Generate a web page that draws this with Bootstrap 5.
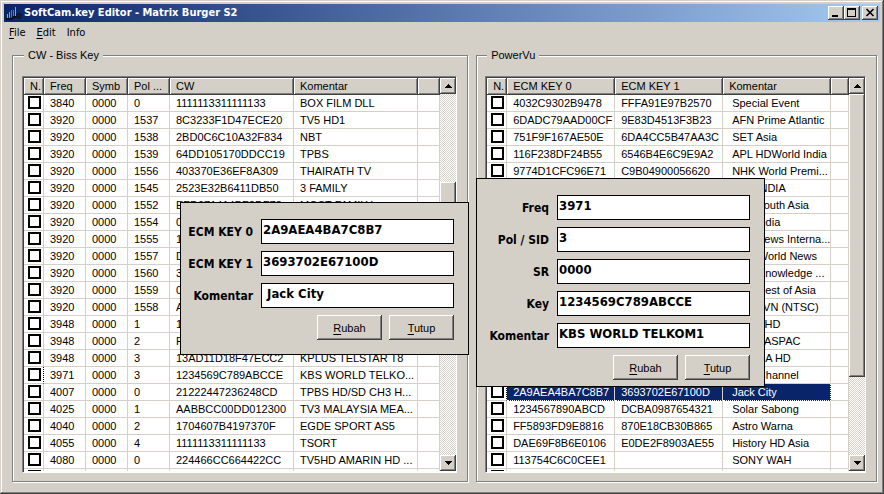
<!DOCTYPE html>
<html lang="id">
<head>
<meta charset="utf-8">
<meta name="viewport" content="width=device-width, initial-scale=1">
<title>SoftCam.key Editor - Matrix Burger S2</title>
<link href="https://cdn.jsdelivr.net/npm/bootstrap@5.3.0/dist/css/bootstrap.min.css" rel="stylesheet">
<style>
:root{--face:#d4d0c8;--tahoma:"DejaVu Sans Condensed","DejaVu Sans",sans-serif}
body{background:var(--face);color:#000;font:11px/16px "Liberation Sans",sans-serif}
.win{background:var(--face);padding:4px;box-shadow:inset -1px -1px #404040,inset 1px 1px var(--face),inset -2px -2px #808080,inset 2px 2px #fff}
.titlebar{height:18px;padding:0 2px;background:linear-gradient(90deg,#0a246a,#a6caf0);color:#fff;font:bold 11px/18px var(--tahoma)}
.app-name{padding-left:2px}
.raised{background:var(--face);border:0;border-radius:0;color:#000;box-shadow:inset -1px -1px #404040,inset 1px 1px #fff,inset -2px -2px #808080}
.capbtn{width:16px;height:14px;padding:0}
.capbtn-close{margin-left:2px}
.capbtn svg,.arrow svg{display:block;margin:auto}
.menu{padding:4px 5px;gap:11px;font:11px/14px var(--tahoma)}
.menu a{color:#000;text-decoration:none}
.menu u,.push u{text-underline-offset:2px}
.groups{gap:8px;padding:3px 3px 8px 8px;min-height:0}
.panel{border:1px solid #808080;box-shadow:1px 1px #fff,inset 1px 1px #fff;padding:13px 10px 8px 8px;margin:0;min-width:0;display:flex;flex-direction:column}
.panel legend{float:none;width:auto;margin:0 0 0 2px;padding:0 4px;font-size:11px;line-height:16px;background:var(--face)}
.g-left{flex:457 1 0;padding-left:9px}
.g-right{flex:400 1 0}
.list{flex:1 1 0;min-height:0;background:#fff;border:1px solid;border-color:#808080 #fff #fff #808080;box-shadow:inset 1px 1px #404040;padding:1px 0 1px 1px;overflow:hidden}
.rows{flex:1 1 0;min-width:0;overflow:hidden}
.grid{width:100%;table-layout:fixed;border-collapse:separate;border-spacing:0}
.grid th{height:17px;padding:0 0 0 6px;font-weight:400;line-height:17px;background:var(--face);box-shadow:inset -1px -1px #404040,inset 1px 1px #fff,inset -2px -2px #808080;white-space:nowrap;overflow:hidden}
.grid td{height:17px;padding:0 0 0 6px;line-height:16px;border:solid var(--face);border-width:0 1px 1px 0;white-space:nowrap;overflow:hidden}
.grid td:first-child{padding:1px 0 0 4px;vertical-align:top}
.c-no{width:20px}.c-num{width:42px}.c-cw{width:124px}.c-key{width:108px}
.g-right td:nth-child(4){padding-left:9px}
.tick{appearance:none;display:block;width:13px;height:13px;margin:0;border:2px solid #000;border-radius:0;background:#fff}
.tick:checked{background:#000}
.focused td:first-child{border-right:1px dotted #000}
.chosen td:nth-child(n+2):nth-child(-n+4){background:#0a246a;color:#fff;border-bottom:1px dotted #fff}
.chosen td:nth-child(4){border-right:1px dotted #fff}
.scroll{width:16px;background:repeating-conic-gradient(#fff 0 25%,var(--face) 0 50%) 0 0/2px 2px}
.arrow{height:16px;padding:0;flex:none}
.before{flex:88 1 0}.thumb-mid{flex:92 1 0}.after{flex:181 1 0}
.thumb-top{flex:283 1 0}.after-top{flex:78 1 0}
.dialogbox{position:absolute;background:var(--face);border:1px solid #000;width:289px;padding:16px 14px 14px 8px}
.edit-key{left:180px;top:202px}
.edit-biss{left:476px;top:178px;padding-bottom:6px}
.fields{display:grid;grid-template-columns:auto 193px;justify-content:end;gap:7px 8px}
.fields label{font:bold 12px/25px var(--tahoma);text-align:right;padding-top:1px;height:25px;white-space:nowrap}
.fields input{width:100%;height:25px;border:1px solid #000;border-radius:0;padding:0 1px 4px;background:#fff;color:#000;font:bold 13px/19px var(--tahoma)}
.actions{gap:7px;margin-top:7px}
.push{width:65px;height:25px;padding:0;font-size:11px}
</style>
<script src="https://cdn.jsdelivr.net/npm/bootstrap@5.3.0/dist/js/bootstrap.bundle.min.js"></script>
</head>
<body>
<main class="win vh-100 d-flex flex-column">
  <header class="titlebar d-flex align-items-center">
    <svg width="16" height="16" viewBox="0 0 16 16" aria-hidden="true"><path d="M1.5 9v4M9.500 2v9" stroke="#20d8c0"/><path d="M3.500 7v6" stroke="#30e060"/><path d="M5.500 5v8M7.500 5v6" stroke="#1890d8"/><path d="M0 14h5l3-2h5" fill="none" stroke="#081018" stroke-width="2"/><circle cx="13" cy="11" r="2" fill="none" stroke="#10182c" stroke-width="2"/></svg>
    <span class="app-name flex-grow-1">SoftCam.key Editor - Matrix Burger S2</span>
    <button class="raised capbtn" aria-label="Minimize"><svg width="16" height="14"><path d="M4 9h6v2H4z"/></svg></button>
    <button class="raised capbtn" aria-label="Maximize"><svg width="16" height="14"><path d="M3 2h9v9H3zM4 4v6h7V4z" fill-rule="evenodd"/></svg></button>
    <button class="raised capbtn capbtn-close" aria-label="Close"><svg width="16" height="14"><path d="M4.500 3l7 7M11.500 3l-7 7" stroke="#000" stroke-width="1.600"/></svg></button>
  </header>
  <nav class="menu d-flex"><a href="#"><u>F</u>ile</a><a href="#"><u>E</u>dit</a><a href="#">Info</a></nav>
  <div class="groups d-flex flex-grow-1">
    <fieldset class="panel g-left">
      <legend>CW - Biss Key</legend>
      <div class="list d-flex">
        <div class="rows"><table class="grid">
          <colgroup><col class="c-no"><col class="c-num"><col class="c-num"><col class="c-num"><col class="c-cw"><col class="c-cw"><col></colgroup>
          <thead><tr><th>N.</th><th>Freq</th><th>Symb</th><th>Pol ...</th><th>CW</th><th>Komentar</th><th></th></tr></thead>
          <tbody id="biss"></tbody>
        </table></div>
        <div class="scroll d-flex flex-column">
          <button class="raised arrow" aria-label="Scroll up"><svg width="7" height="4"><path d="M3 0h1v1h1v1h1v1h1v1H0V3h1V2h1V1h1z"/></svg></button>
          <div class="before"></div><div class="raised thumb-mid"></div><div class="after"></div>
          <button class="raised arrow" aria-label="Scroll down"><svg width="7" height="4"><path d="M0 0h7v1H6v1H5v1H4v1H3V3H2V2H1V1H0z"/></svg></button>
        </div>
      </div>
    </fieldset>
    <fieldset class="panel g-right">
      <legend>PowerVu</legend>
      <div class="list d-flex">
        <div class="rows"><table class="grid">
          <colgroup><col class="c-no"><col class="c-key"><col class="c-key"><col class="c-key"><col></colgroup>
          <thead><tr><th>N.</th><th>ECM KEY 0</th><th>ECM KEY 1</th><th>Komentar</th><th></th></tr></thead>
          <tbody id="power"></tbody>
        </table></div>
        <div class="scroll d-flex flex-column">
          <button class="raised arrow" aria-label="Scroll up"><svg width="7" height="4"><path d="M3 0h1v1h1v1h1v1h1v1H0V3h1V2h1V1h1z"/></svg></button>
          <div class="raised thumb-top"></div><div class="after-top"></div>
          <button class="raised arrow" aria-label="Scroll down"><svg width="7" height="4"><path d="M0 0h7v1H6v1H5v1H4v1H3V3H2V2H1V1H0z"/></svg></button>
        </div>
      </div>
    </fieldset>
  </div>
</main>

<form class="dialogbox edit-key">
  <div class="fields">
    <label for="k0">ECM KEY 0</label><input id="k0" value="2A9AEA4BA7C8B7">
    <label for="k1">ECM KEY 1</label><input id="k1" value="3693702E67100D">
    <label for="kk">Komentar</label><input id="kk" value=" Jack City">
  </div>
  <div class="actions d-flex justify-content-end"><button type="button" class="raised push"><u>R</u>ubah</button><button type="button" class="raised push"><u>T</u>utup</button></div>
</form>

<form class="dialogbox edit-biss">
  <div class="fields">
    <label for="bf">Freq</label><input id="bf" value="3971">
    <label for="bp">Pol / SID</label><input id="bp" value="3">
    <label for="bs">SR</label><input id="bs" value="0000">
    <label for="bk">Key</label><input id="bk" value="1234569C789ABCCE">
    <label for="bc">Komentar</label><input id="bc" value="KBS WORLD TELKOM1">
  </div>
  <div class="actions d-flex justify-content-end"><button type="button" class="raised push"><u>R</u>ubah</button><button type="button" class="raised push"><u>T</u>utup</button></div>
</form>

<script>
const biss = `3840|0000|0|1111113311111133|BOX FILM DLL
3920|0000|1537|8C3233F1D47ECE20|TV5 HD1
3920|0000|1538|2BD0C6C10A32F834|NBT
3920|0000|1539|64DD105170DDCC19|TPBS
3920|0000|1556|403370E36EF8A309|THAIRATH TV
3920|0000|1545|2523E32B6411DB50|3 FAMILY
3920|0000|1552|EFD071414BF2DF78|MOST FAMILY
3920|0000|1554|0|
3920|0000|1555|1|
3920|0000|1557|D|
3920|0000|1560|3|
3920|0000|1559|0|
3920|0000|1558|A|
3948|0000|1|1|
3948|0000|2|F|
3948|0000|3|13AD11D18F47ECC2|KPLUS TELSTAR T8
3971|0000|3|1234569C789ABCCE|KBS WORLD TELKO...
4007|0000|0|21222447236248CD|TPBS HD/SD CH3 H...
4025|0000|1|AABBCC00DD012300|TV3 MALAYSIA MEA...
4040|0000|2|1704607B4197370F|EGDE SPORT AS5
4055|0000|4|1111113311111133|TSORT
4080|0000|0|224466CC664422CC|TV5HD AMARIN HD ...
||||`;
const power = `4032C9302B9478|FFFA91E97B2570|Special Event
6DADC79AAD00CF|9E83D4513F3B23|AFN Prime Atlantic
751F9F167AE50E|6DA4CC5B47AA3C|SET Asia
116F238DF24B55|6546B4E6C9E9A2|APL HDWorld India
9774D1CFC96E71|C9B04900056620|NHK World Premi...
||SET INDIA
||SET South Asia
||SET India
||SET News Interna...
||BBC World News
||BBC Knowledge ...
||BBC Best of Asia
||KTV TVN (NTSC)
||Movie HD
||Movie ASPAC
||AFRICA HD
||ABC Channel
2A9AEA4BA7C8B7|3693702E67100D|Jack City
1234567890ABCD|DCBA0987654321|Solar Sabong
FF5893FD9E8816|870E18CB30B865|Astro Warna
DAE69F8B6E0106|E0DE2F8903AE55|History HD Asia
113754C6C0CEE1||SONY WAH
||`;
function fill(id, data, active, cls) {
  document.getElementById(id).innerHTML = data.split('\n').map((line, i) =>
    `<tr class="${i === active ? cls : ''}"><td><input class="tick" type="checkbox" aria-label="Row ${i + 1}"></td>` +
    line.split('|').map(v => `<td>${v}</td>`).join('') + '<td></td></tr>').join('');
}
fill('biss', biss, 16, 'focused');
fill('power', power, 17, 'focused chosen');
</script>
</body>
</html>
